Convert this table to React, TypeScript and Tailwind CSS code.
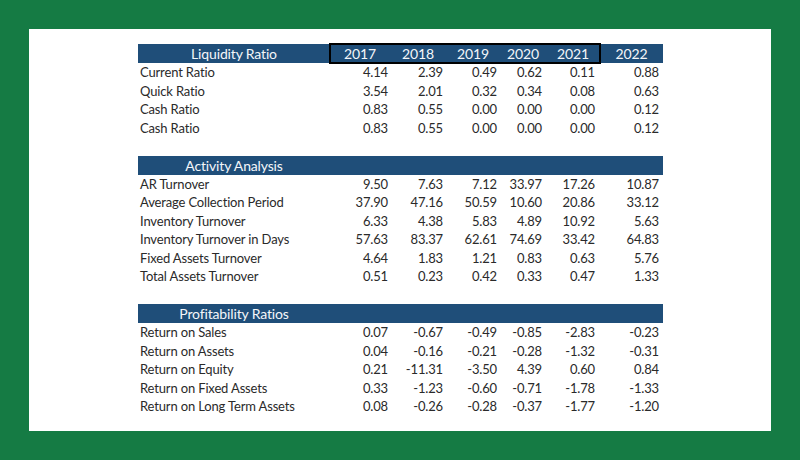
const years = ["2017", "2018", "2019", "2020", "2021", "2022"]

// right padding of each year column, so the figures sit where Excel put them
const padR = ["pr-[2px]", "pr-[3px]", "pr-[3px]", "pr-[4px]", "pr-[5px]", "pr-[4px]"]

const sections = [
  {
    title: "Liquidity Ratio",
    showYears: true,
    rows: [
      ["Current Ratio", "4.14", "2.39", "0.49", "0.62", "0.11", "0.88"],
      ["Quick Ratio", "3.54", "2.01", "0.32", "0.34", "0.08", "0.63"],
      ["Cash Ratio", "0.83", "0.55", "0.00", "0.00", "0.00", "0.12"],
      ["Cash Ratio", "0.83", "0.55", "0.00", "0.00", "0.00", "0.12"],
    ],
  },
  {
    title: "Activity Analysis",
    showYears: false,
    rows: [
      ["AR Turnover", "9.50", "7.63", "7.12", "33.97", "17.26", "10.87"],
      ["Average Collection Period", "37.90", "47.16", "50.59", "10.60", "20.86", "33.12"],
      ["Inventory Turnover", "6.33", "4.38", "5.83", "4.89", "10.92", "5.63"],
      ["Inventory Turnover in Days", "57.63", "83.37", "62.61", "74.69", "33.42", "64.83"],
      ["Fixed Assets Turnover", "4.64", "1.83", "1.21", "0.83", "0.63", "5.76"],
      ["Total Assets Turnover", "0.51", "0.23", "0.42", "0.33", "0.47", "1.33"],
    ],
  },
  {
    title: "Profitability Ratios",
    showYears: false,
    rows: [
      ["Return on Sales", "0.07", "-0.67", "-0.49", "-0.85", "-2.83", "-0.23"],
      ["Return on Assets", "0.04", "-0.16", "-0.21", "-0.28", "-1.32", "-0.31"],
      ["Return on Equity", "0.21", "-11.31", "-3.50", "4.39", "0.60", "0.84"],
      ["Return on Fixed Assets", "0.33", "-1.23", "-0.60", "-0.71", "-1.78", "-1.33"],
      ["Return on Long Term Assets", "0.08", "-0.26", "-0.28", "-0.37", "-1.77", "-1.20"],
    ],
  },
]

const cols = "grid grid-cols-[192px_60px_56px_54px_46px_54px_63px]"

function HeaderRow({ title, showYears }: { title: string; showYears: boolean }) {
  return (
    <div className={`${cols} h-[19px] bg-[#1f4e79] text-[#f4f6f9] text-[14px] leading-[19px]`}>
      <div className="text-center">{title}</div>
      {showYears ? (
        <>
          <div className="col-span-5 grid grid-cols-[60px_56px_54px_46px_54px] outline-2 outline-black -outline-offset-1">
            {years.slice(0, 5).map((y) => (
              <div key={y} className="text-center">
                {y}
              </div>
            ))}
          </div>
          <div className="text-center">{years[5]}</div>
        </>
      ) : (
        <div className="col-span-6" />
      )}
    </div>
  )
}

export default function App() {
  return (
    <div
      className="w-[800px] h-[460px] bg-[#157b44] p-[29px]"
      style={{ fontFamily: "Lato, 'Liberation Sans', sans-serif" }}
    >
      <div className="w-[742px] h-[402px] bg-white pl-[109px] pt-[15px]">
        <div className="w-[525px] flex flex-col text-[#2a2a2a] text-[13px] tracking-[-0.15px]">
          {sections.map((s, i) => (
            <div key={s.title} className={i > 0 ? "mt-[18.5px]" : ""}>
              <HeaderRow title={s.title} showYears={s.showYears} />
              {s.rows.map((r, j) => (
                <div key={j} className={`${cols} h-[18.5px] leading-[18.5px]`}>
                  <div className="pl-[2px] whitespace-nowrap">{r[0]}</div>
                  {r.slice(1).map((v, k) => (
                    <div key={k} className={`text-right ${padR[k]}`}>
                      {v}
                    </div>
                  ))}
                </div>
              ))}
            </div>
          ))}
        </div>
      </div>
    </div>
  )
}
